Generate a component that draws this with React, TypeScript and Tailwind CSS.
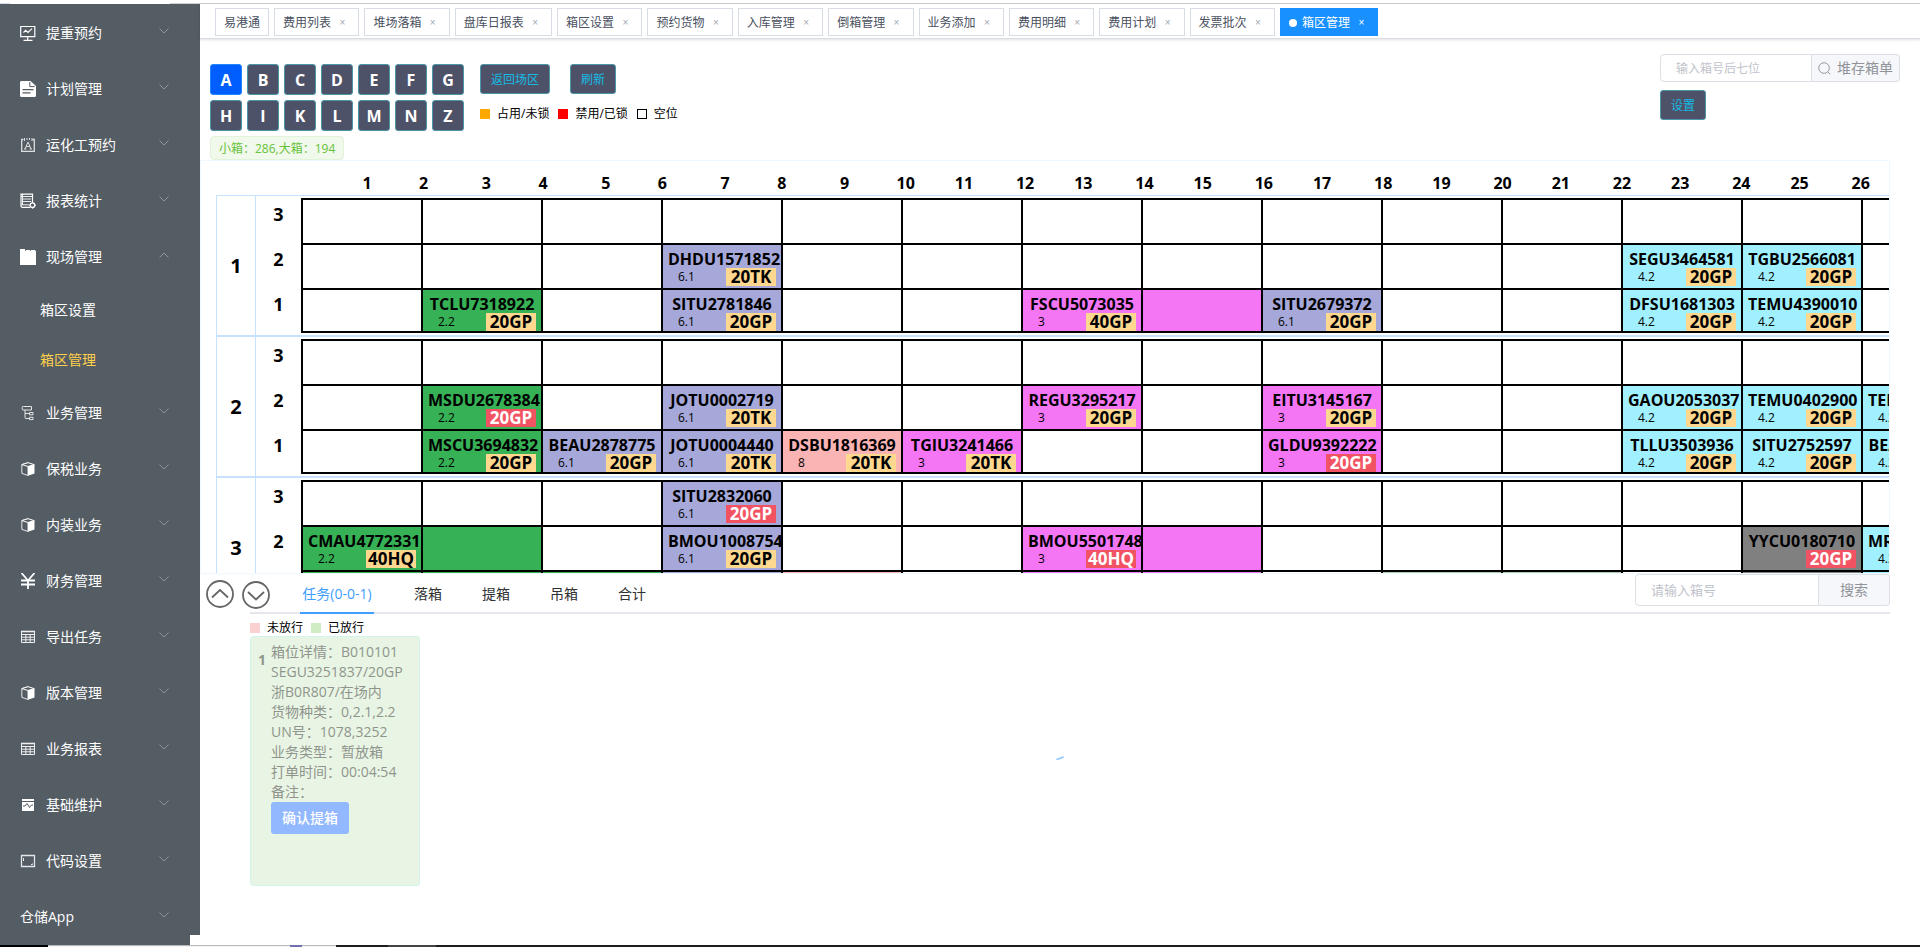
import type { ReactNode } from 'react'
import clsx from 'clsx'

type IconName =
  | 'board' | 'doc' | 'frame' | 'report' | 'site' | 'flow' | 'box' | 'yuan' | 'table' | 'wave' | 'code'

const ICONS: Record<IconName, ReactNode> = {
  board: (
    <g fill="none" stroke="currentColor">
      <path d="M.7 1.500h14.100v10.200H.7z" strokeWidth="1.200" />
      <path d="M3.500 7.500l2.200-2.200 2.300 2.200 4-3.800" strokeWidth="1.100" />
      <path d="M7.700 11.700v3M3.500 15.300h9" strokeWidth="1.200" />
    </g>
  ),
  doc: (
    <g>
      <path d="M2 0h8.500L16 5v9.500a1.500 1.500 0 0 1-1.500 1.500h-13A1.500 1.500 0 0 1 0 14.500v-13A1.500 1.500 0 0 1 2 0z" fill="currentColor" />
      <path d="M9.800 1v4.600h5" fill="none" stroke="#545c64" />
      <path d="M2.500 8.700h11M2.500 11.900h8" stroke="#545c64" strokeWidth="1.200" />
    </g>
  ),
  frame: (
    <g fill="none" stroke="currentColor" opacity=".8">
      <path d="M3.500 2.500H1.700v11.800h12.600V2.500h-1.800" strokeWidth="1.300" />
      <path d="M4.500 1v3M7 1v2M9.500 1v2M12 1v3M5 12l3-7 3 7M6 9.500h4M4 12h2.500M9.500 12H12" />
    </g>
  ),
  report: (
    <g fill="none" stroke="currentColor">
      <path d="M10 14.300H2.500A1.300 1.300 0 0 1 1 13V1.200h11.500V9" strokeWidth="1.200" />
      <path d="M1 3.500h11M3 6h8M3 8.500h8M1 11.800h8M2.500 1v11" strokeWidth=".9" />
      <circle cx="12.500" cy="12.200" r="2.300" strokeWidth="1.300" />
      <path d="M12.500 8.800v1.200M12.500 14.400v1.200M9.200 12.200h1M14.800 12.200h1" />
    </g>
  ),
  site: <path d="M0 0h5v1.800h1V1h4v.8h1V1h4v.8h1V16H0z" fill="currentColor" />,
  flow: (
    <g fill="none" stroke="currentColor" opacity=".85">
      <path d="M3.500 1.500h8v3.500H3.200a1 1 0 0 1-1-1V2.500a1 1 0 0 1 1.300-1z" />
      <path d="M5 5v7.500a1 1 0 0 0 1 1h4M5 8.500h5" />
      <path d="M9.500 7.500H13v2.300H9.500zM9.500 12.300H13v2.300H9.500z" />
    </g>
  ),
  box: (
    <g>
      <path d="M8 1.700L1.800 3.600v8.700L8 14.500z" fill="none" stroke="currentColor" opacity=".85" />
      <path d="M1.800 3.600L8 1.700l6.200 1.900L8 5.500z" fill="#545c64" stroke="currentColor" />
      <path d="M8 5.500l6.500-1.900v8.900L8 14.700z" fill="currentColor" />
    </g>
  ),
  yuan: (
    <path d="M1.500 0L8 7.500 14.500 0M8 7.500V16M1 7.500h14M1 11.500h14" fill="none" stroke="currentColor" strokeWidth="1.800" />
  ),
  table: (
    <g fill="none" stroke="currentColor" opacity=".9">
      <path d="M1.500 2.500h13v11h-13zM1.500 5.500h13M1.500 8.200h13M1.500 10.800h13M5.800 5.500v8M10.200 5.500v8" />
      <path d="M1 2.500h14" strokeWidth="1.600" />
    </g>
  ),
  wave: (
    <g>
      <path d="M2 2h12v12H2z" fill="currentColor" />
      <path d="M2 4.500h12M3 9h2l2-2.500 2.500 4L11.500 8H13" fill="none" stroke="#545c64" />
    </g>
  ),
  code: (
    <g fill="none" stroke="currentColor" opacity=".85">
      <path d="M1.500 2.500h13v11h-13z" strokeWidth="1.300" />
      <path d="M3.500 5v3M12.500 10.500v1h-1.500" />
    </g>
  ),
}

const MENU: { label: string; icon?: IconName; children?: string[] }[] = [
  { label: '提重预约', icon: 'board' },
  { label: '计划管理', icon: 'doc' },
  { label: '运化工预约', icon: 'frame' },
  { label: '报表统计', icon: 'report' },
  { label: '现场管理', icon: 'site', children: ['箱区设置', '箱区管理'] },
  { label: '业务管理', icon: 'flow' },
  { label: '保税业务', icon: 'box' },
  { label: '内装业务', icon: 'box' },
  { label: '财务管理', icon: 'yuan' },
  { label: '导出任务', icon: 'table' },
  { label: '版本管理', icon: 'box' },
  { label: '业务报表', icon: 'table' },
  { label: '基础维护', icon: 'wave' },
  { label: '代码设置', icon: 'code' },
  { label: '仓储App' },
]

const TAGS = [
  '费用列表', '堆场落箱', '盘库日报表', '箱区设置', '预约货物', '入库管理',
  '倒箱管理', '业务添加', '费用明细', '费用计划', '发票批次',
]

const AREAS = ['A', 'B', 'C', 'D', 'E', 'F', 'G', 'H', 'I', 'K', 'L', 'M', 'N', 'Z']

const TONES = {
  green: 'bg-[#36b155]',
  purple: 'bg-[#a6a8d9]',
  pink: 'bg-[#f576f5]',
  rose: 'bg-[#fbb4b4]',
  cyan: 'bg-[#a0f0ff]',
  gray: 'bg-[#808080]',
  sage: 'bg-[#b5ccb0]',
}

type Slot = { tone: keyof typeof TONES; no?: string; cls?: string; size?: string; locked?: boolean }

const slot = (tone: Slot['tone'], no?: string, cls?: string, size?: string, locked = false): Slot => ({
  tone, no, cls, size, locked,
})

// each tier maps a column index (0 = bay 1/2) to the container stored there
const ROWS: { row: number; tiers: { tier: number; slots: Record<number, Slot> }[] }[] = [
  {
    row: 1,
    tiers: [
      { tier: 3, slots: {} },
      {
        tier: 2,
        slots: {
          3: slot('purple', 'DHDU1571852', '6.1', '20TK'),
          11: slot('cyan', 'SEGU3464581', '4.2', '20GP'),
          12: slot('cyan', 'TGBU2566081', '4.2', '20GP'),
        },
      },
      {
        tier: 1,
        slots: {
          1: slot('green', 'TCLU7318922', '2.2', '20GP'),
          3: slot('purple', 'SITU2781846', '6.1', '20GP'),
          6: slot('pink', 'FSCU5073035', '3', '40GP'),
          7: slot('pink'),
          8: slot('purple', 'SITU2679372', '6.1', '20GP'),
          11: slot('cyan', 'DFSU1681303', '4.2', '20GP'),
          12: slot('cyan', 'TEMU4390010', '4.2', '20GP'),
        },
      },
    ],
  },
  {
    row: 2,
    tiers: [
      { tier: 3, slots: {} },
      {
        tier: 2,
        slots: {
          1: slot('green', 'MSDU2678384', '2.2', '20GP', true),
          3: slot('purple', 'JOTU0002719', '6.1', '20TK'),
          6: slot('pink', 'REGU3295217', '3', '20GP'),
          8: slot('pink', 'EITU3145167', '3', '20GP'),
          11: slot('cyan', 'GAOU2053037', '4.2', '20GP'),
          12: slot('cyan', 'TEMU0402900', '4.2', '20GP'),
          13: slot('cyan', 'TEMU0402921', '4.2', '20GP'),
        },
      },
      {
        tier: 1,
        slots: {
          1: slot('green', 'MSCU3694832', '2.2', '20GP'),
          2: slot('purple', 'BEAU2878775', '6.1', '20GP'),
          3: slot('purple', 'JOTU0004440', '6.1', '20TK'),
          4: slot('rose', 'DSBU1816369', '8', '20TK'),
          5: slot('pink', 'TGIU3241466', '3', '20TK'),
          8: slot('pink', 'GLDU9392222', '3', '20GP', true),
          11: slot('cyan', 'TLLU3503936', '4.2', '20GP'),
          12: slot('cyan', 'SITU2752597', '4.2', '20GP'),
          13: slot('cyan', 'BEAU2752610', '4.2', '20GP'),
        },
      },
    ],
  },
  {
    row: 3,
    tiers: [
      { tier: 3, slots: { 3: slot('purple', 'SITU2832060', '6.1', '20GP', true) } },
      {
        tier: 2,
        slots: {
          0: slot('green', 'CMAU4772331', '2.2', '40HQ'),
          1: slot('green'),
          3: slot('purple', 'BMOU1008754', '6.1', '20GP'),
          6: slot('pink', 'BMOU5501748', '3', '40HQ', true),
          7: slot('pink'),
          12: slot('gray', 'YYCU0180710', '', '20GP', true),
          13: slot('cyan', 'MRTU0180735', '4.2', '20GP'),
        },
      },
      {
        tier: 1,
        slots: {
          0: slot('green'), 1: slot('green'), 2: slot('green'), 3: slot('purple'), 4: slot('rose'),
          6: slot('pink'), 7: slot('pink'), 9: slot('sage'), 10: slot('sage'), 12: slot('gray'), 13: slot('cyan'),
        },
      },
    ],
  },
]

const COLUMNS = Array.from({ length: 14 }, (_, i) => i)

const TASK = [
  '箱位详情：B010101', 'SEGU3251837/20GP', '浙B0R807/在场内', '货物种类：0,2.1,2.2',
  'UN号：1078,3252', '业务类型：暂放箱', '打单时间：00:04:54', '备注：',
]

function Chevron({ up, className }: { up?: boolean; className?: string }) {
  return (
    <svg viewBox="0 0 10 6" className={className} fill="none" stroke="currentColor" aria-hidden="true">
      <path d={up ? 'M.5 5.500L5 1l4.500 4.500' : 'M.5.5L5 5 9.500.5'} />
    </svg>
  )
}

function Sidebar() {
  return (
    <aside className="w-[200px] shrink-0 flex flex-col text-sm text-white">
      <nav className="bg-[#545c64] pt-px">
        {MENU.map((item) => (
          <div key={item.label}>
            <button className="w-full h-14 pl-5 pr-[31px] flex items-center text-left">
              {item.icon && (
                <svg viewBox="0 0 16 16" className="w-4 h-4 mr-[10px]" aria-hidden="true">
                  {ICONS[item.icon]}
                </svg>
              )}
              <span className="flex-1">{item.label}</span>
              <Chevron up={!!item.children} className="w-[10px] h-[6px] mb-1 text-[#8d9297]" />
            </button>
            {item.children?.map((child) => (
              <a
                key={child}
                href="#"
                className={clsx('h-[50px] pl-10 flex items-center', child === '箱区管理' && 'text-[#ffd04b]')}
              >
                {child}
              </a>
            ))}
          </div>
        ))}
      </nav>
    </aside>
  )
}

function TagBar() {
  const base = 'h-7 px-2 pt-px flex items-center border text-xs whitespace-nowrap'
  return (
    <div className="h-[35px] pl-[15px] pt-1 flex gap-[5px] border-b border-[#d8dce5] shadow-[0_1px_3px_rgba(0,0,0,0.12)] font-['Liberation_Sans','Noto_Sans_CJK_SC',sans-serif]">
      <a href="#" className={clsx(base, 'border-[#d8dce5] text-[#495060]')}>易港通</a>
      {TAGS.map((tag) => (
        <a key={tag} href="#" className={clsx(base, 'border-[#d8dce5] text-[#495060]')}>
          {tag}&nbsp;
          <span className="w-4 text-center text-[10px] text-[#a4a8b0]">×</span>
        </a>
      ))}
      <a href="#" className={clsx(base, 'border-[#1890ff] bg-[#1890ff] text-white')}>
        <span className="w-2 h-2 mr-[5px] rounded-full bg-white" />
        箱区管理&nbsp;
        <span className="w-4 text-center text-[10px]">×</span>
      </a>
    </div>
  )
}

const DARK_BTN = 'h-[30px] px-[10px] pt-[2px] rounded-[3px] border border-[#4a96a8] bg-[#4e5268] text-xs text-[#14bce6]'

function Toolbar() {
  return (
    <div className="flex items-start">
      <div>
        <div className="mt-[25px] w-[254px] grid grid-cols-7 gap-x-[5px] gap-y-[5px]">
          {AREAS.map((a) => (
            <button
              key={a}
              className={clsx(
                'h-[31px] rounded-[3px] border text-base leading-none font-bold text-white',
                a === 'A' ? 'bg-[#005eff] border-[#1f86ff]' : 'bg-[#4e5268] border-[#4a96a8]',
              )}
            >
              {a}
            </button>
          ))}
        </div>
        <span className="mt-[5px] h-6 px-2 pt-px inline-flex items-center rounded border border-[#e1f3d8] bg-[#f0f9eb] text-xs text-[#67c23a]">
          小箱：286,大箱：194
        </span>
      </div>

      <div className="ml-4 mt-[25px]">
        <div className="flex gap-5">
          <button className={DARK_BTN}>返回场区</button>
          <button className={DARK_BTN}>刷新</button>
        </div>
        <div className="mt-3 flex items-center text-xs text-black">
          <span className="w-[10px] h-[10px] mr-[7px] bg-[#ffa900]" />占用/未锁
          <span className="w-[10px] h-[10px] ml-[9px] mr-[7px] bg-[#ff0000]" />禁用/已锁
          <span className="w-[10px] h-[10px] ml-[9px] mr-[7px] border border-black" />空位
        </div>
      </div>

      <div className="ml-auto mr-5 mt-[15px]">
        <div className="flex h-7">
          <input
            aria-label="箱号后七位"
            placeholder="输入箱号后七位"
            className="w-[152px] px-[15px] pt-px rounded-l border border-[#dcdfe6] text-xs placeholder:text-[#bfc3cb]"
          />
          <button className="w-[88px] flex items-center justify-center gap-[6px] rounded-r border border-l-0 border-[#dcdfe6] bg-[#f5f7fa] text-sm text-[#909399] whitespace-nowrap">
            <svg viewBox="0 0 14 14" className="w-[13px] h-[13px]" fill="none" stroke="currentColor" aria-hidden="true">
              <circle cx="6.500" cy="6.500" r="5.700" />
              <path d="M10.800 10.800l2.500 2.500" />
            </svg>
            堆存箱单
          </button>
        </div>
        <button className={clsx(DARK_BTN, 'mt-2')}>设置</button>
      </div>
    </div>
  )
}

function SlotBody({ data }: { data: Slot }) {
  return (
    <div className="w-[118px] px-[5px] pt-[5px] text-black">
      <div className="h-[18px] leading-[18px] text-base font-bold text-center whitespace-nowrap">{data.no}</div>
      <div className="h-[18px] pl-[10px] flex items-center justify-between">
        <span className="text-xs">{data.cls}</span>
        <span
          className={clsx(
            'w-[50px] h-[18px] leading-[18px] text-center text-[17px] font-bold',
            data.locked ? 'bg-[#f25363] text-white' : 'bg-[#fed88f]',
          )}
        >
          {data.size}
        </span>
      </div>
    </div>
  )
}

function YardMap() {
  return (
    <section className="h-[414px] mr-[30px] border border-[#f0f8ff] overflow-hidden font-bold text-black">
      <div className="w-[1552px] ml-[126px] h-[34px] pt-[10px] grid grid-cols-13 text-base leading-6">
        {COLUMNS.slice(0, 13).map((i) => (
          <div key={i} className="flex">
            <span className="w-20 text-center">{i * 2 + 1}</span>
            <span className="ml-3">{i * 2 + 2}</span>
          </div>
        ))}
      </div>
      <div className="ml-[15px] border-l border-t border-[#c6e2ff]">
        {ROWS.map(({ row, tiers }) => (
          <div key={row} className="flex w-max min-w-full border-b-2 border-[#c6e2ff]">
            <div className="w-[39px] border-r border-[#c6e2ff] flex items-center justify-center text-xl">{row}</div>
            <div className="w-[45px] pt-[2px] text-center text-lg">
              {tiers.map((t) => (
                <div key={t.tier} className="h-[45px] leading-8">{t.tier}</div>
              ))}
            </div>
            <table className="my-[2px] table-fixed border-separate border-spacing-0 w-[1680px] font-normal">
              <tbody>
                {tiers.map((t, ti) => (
                  <tr key={t.tier}>
                    {COLUMNS.map((c) => (
                      <td
                        key={c}
                        className={clsx(
                          'h-[45px] p-0 align-top border-t-2 border-l-2 border-black',
                          ti === 2 && 'border-b-2',
                          t.slots[c] && TONES[t.slots[c].tone],
                        )}
                      >
                        {t.slots[c]?.no && <SlotBody data={t.slots[c]} />}
                      </td>
                    ))}
                  </tr>
                ))}
              </tbody>
            </table>
          </div>
        ))}
      </div>
    </section>
  )
}

function RoundButton({ up }: { up?: boolean }) {
  return (
    <button aria-label={up ? '上移' : '下移'} className="text-[#666]">
      <svg viewBox="0 0 28 28" className="w-7 h-7" fill="none" stroke="currentColor" strokeWidth="1.800">
        <circle cx="14" cy="14" r="13" />
        <path d={up ? 'M6 17.500l8-7.500 8 7.500' : 'M6 11l8 7.500 8-7.500'} />
      </svg>
    </button>
  )
}

function TaskPanel() {
  return (
    <section className="mr-[30px]">
      <div className="flex">
        <div className="w-[50px] pl-[6px] pt-[6px] flex gap-2">
          <div className="shrink-0"><RoundButton up /></div>
          <div className="shrink-0 pt-px"><RoundButton /></div>
        </div>
        <div className="flex-1 h-10 pl-[50px] flex gap-10 border-b-2 border-[#e4e7ed] text-sm text-[#303133]">
          <button className="w-[74px] h-10 pt-[2px] border-b-2 border-[#409eff] text-[#409eff] whitespace-nowrap">任务(0-0-1)</button>
          <button className="h-[38px] pt-[2px]">落箱</button>
          <button className="h-[38px] pt-[2px]">提箱</button>
          <button className="h-[38px] pt-[2px]">吊箱</button>
          <button className="h-[38px] pt-[2px]">合计</button>
          <div className="ml-auto h-8 flex">
            <input
              aria-label="箱号"
              placeholder="请输入箱号"
              className="w-[184px] px-[15px] rounded-l border border-[#dcdfe6] text-[13px] placeholder:text-[#bfc3cb]"
            />
            <button className="w-[71px] rounded-r border border-l-0 border-[#dcdfe6] bg-[#f5f7fa] text-[#909399]">搜索</button>
          </div>
        </div>
      </div>

      <div className="pl-[50px]">
        <div className="h-[21px] pt-1 flex items-center text-xs text-black">
          <span className="w-[10px] h-[10px] mr-[7px] bg-[#fbd0d0]" />未放行
          <span className="w-[10px] h-[10px] ml-2 mr-[7px] bg-[#d0ecc4]" />已放行
        </div>
        <article className="w-[170px] h-[250px] pl-[7px] pt-[5px] flex items-start gap-[5px] rounded-[3px] border border-[#d3f4ec] bg-[#e9f5e4] text-sm text-[#8f948d]">
          <span className="w-2 mt-2 font-bold">1</span>
          <div>
            {TASK.map((line) => (
              <p key={line} className="leading-5 whitespace-nowrap">{line}</p>
            ))}
            <button className="h-8 px-[11px] rounded-[3px] bg-[#92b8ff] font-medium text-white">确认提箱</button>
          </div>
        </article>
      </div>
    </section>
  )
}

export default function App() {
  return (
    <div className="relative min-h-screen flex flex-col overflow-hidden bg-white font-['Open_Sans','Noto_Sans_CJK_SC',sans-serif]">
      <div className="h-1 shrink-0 flex items-end">
        <div className="w-[10px] h-px bg-[#d8dce5]" />
        <div className="ml-[160px] flex-1 h-px bg-[#cfcfcf]" />
      </div>
      <div className="flex-1 flex">
        <Sidebar />
        <main className="flex-1 min-w-0">
          <TagBar />
          <div className="pl-[10px]">
            <Toolbar />
          </div>
          <YardMap />
          <TaskPanel />
        </main>
      </div>
      {/* scrollbar corner under the menu */}
      <div className="absolute left-[190px] bottom-[2px] w-[10px] h-[10px] bg-white" />
      <svg viewBox="0 0 8 4" className="absolute left-[1056px] top-[756px] w-2 h-1" aria-hidden="true">
        <path d="M1 3.200Q4 2.800 7 1" fill="none" stroke="#8cc5ff" strokeWidth="1.600" strokeLinecap="round" />
      </svg>
      <div className="h-[2px] shrink-0 flex bg-[#1c1c20]">
        <div className="w-12 bg-black" />
        <div className="w-[242px] bg-[#f4f4f4] border-t border-[#b8b8b8]" />
        <div className="w-3 bg-[#6f70b0]" />
        <div className="w-[34px] bg-[#f4f4f4] border-t border-[#b8b8b8]" />
        <div className="w-[52px]" />
        <div className="w-12 bg-[#444448]" />
      </div>
    </div>
  )
}
